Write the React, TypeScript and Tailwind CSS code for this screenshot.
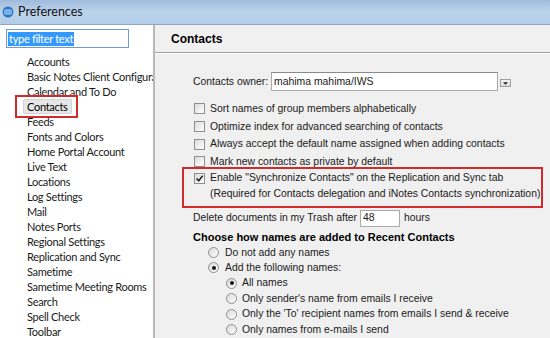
import React from "react";

const Check = ({ checked = false }: { checked?: boolean }) => (
  <span className="relative inline-block w-[11px] h-[11px] border border-[#8e8f8f] bg-gradient-to-br from-[#dcdcdc] to-white shrink-0">
    {checked && (
      <svg viewBox="0 0 9 9" className="absolute left-0 top-0 w-[9px] h-[9px]">
        <path d="M1.5 4.5 L3.7 6.8 L7.7 1.8" stroke="#222" strokeWidth="1.6" fill="none" />
      </svg>
    )}
  </span>
);

const Radio = ({ checked = false }: { checked?: boolean }) => (
  <span className="relative inline-flex items-center justify-center w-[11px] h-[11px] rounded-full border border-[#8e8f8f] bg-gradient-to-br from-[#d8d8d8] to-white shrink-0">
    {checked && <span className="w-[4px] h-[4px] rounded-full bg-[#1a1a1a]" />}
  </span>
);

const treeItems = [
  "Accounts",
  "Basic Notes Client Configuration",
  "Calendar and To Do",
  "Contacts",
  "Feeds",
  "Fonts and Colors",
  "Home Portal Account",
  "Live Text",
  "Locations",
  "Log Settings",
  "Mail",
  "Notes Ports",
  "Regional Settings",
  "Replication and Sync",
  "Sametime",
  "Sametime Meeting Rooms",
  "Search",
  "Spell Check",
  "Toolbar",
];

export default function App() {
  return (
    <div className="w-[550px] h-[338px] overflow-hidden flex flex-col bg-[#f0f0f0] text-black">
      {/* Title bar */}
      <div className="h-[25px] shrink-0 flex items-center gap-[4px] pl-[2px] bg-gradient-to-b from-[#9fbbdc] via-[#bcd3ec] to-[#b4cde8] border-b border-[#8ea7c4] font-['Lato',sans-serif] text-[12.5px]">
        <svg viewBox="0 0 12 12" className="w-[12px] h-[12px]">
          <circle cx="6" cy="6" r="5.5" fill="#2a78c8" />
          <path d="M3 3.5 V8.5 M5 3 V9 M7 3 V9 M9 3.5 V8.5" stroke="#cfe6ff" strokeWidth="1" />
        </svg>
        <span className="text-[#111]">Preferences</span>
      </div>

      <div className="flex-1 flex min-h-0">
        {/* Left panel */}
        <div className="w-[155px] shrink-0 bg-white border-r-2 border-[#b8b8b8] font-['Lato',sans-serif] text-[11px] tracking-[-0.3px] leading-[15px] overflow-hidden">
          <div className="ml-[6px] mt-[4px] w-[123px] h-[19px] border border-[#6f9bd6] bg-white flex items-center pl-[1px]">
            <span className="bg-[#3399ff] text-white px-[1px] leading-[14px] whitespace-nowrap">type filter text</span>
          </div>
          <div className="mt-[6px] whitespace-nowrap">
            {treeItems.map((t) =>
              t === "Contacts" ? (
                <div key={t} className="relative h-[15px] pl-[23px]">
                  <span className="bg-[#e6e6e6] border border-[#d4d4d4] rounded-[2px] px-[3px] py-0">{t}</span>
                  <span className="absolute left-[15px] top-[-4px] w-[63px] h-[23px] border-2 border-[#d22b2b]" />
                </div>
              ) : (
                <div key={t} className="h-[15px] pl-[27px] text-[#1a1a1a]">
                  {t}
                </div>
              )
            )}
          </div>
        </div>

        {/* Right panel */}
        <div className="flex-1 min-w-0 flex flex-col font-['Liberation_Sans',sans-serif] text-[10.4px] text-[#1a1a1a] whitespace-nowrap">
          <div className="h-[28px] shrink-0 flex items-center pl-[16px] border-b border-[#a0a0a0] font-bold text-[12px] text-black">
            Contacts
          </div>
          <div className="border-t border-white" />

          <div className="pl-[38px] pt-[18px]">
            {/* owner */}
            <div className="flex items-center h-[19px]">
              <span>Contacts owner:</span>
              <div className="ml-[3px] w-[227px] h-[19px] bg-white border border-[#a9a9a9] border-t-[#8a8a8a] flex items-center pl-[2px]">
                mahima mahima/IWS
              </div>
              <span className="ml-[2px] mt-[3px] w-[11px] h-[8px] border border-[#a0a0a0] bg-gradient-to-b from-[#f6f6f6] to-[#dcdcdc] flex items-center justify-center">
                <svg viewBox="0 0 6 3" className="w-[5px] h-[3px]">
                  <path d="M0 0 H6 L3 3 Z" fill="#222" />
                </svg>
              </span>
            </div>

            {/* checkboxes */}
            <div className="mt-[9px] flex flex-col">
              {[
                "Sort names of group members alphabetically",
                "Optimize index for advanced searching of contacts",
                "Always accept the default name assigned when adding contacts",
                "Mark new contacts as private by default",
              ].map((t) => (
                <div key={t} className="h-[17.7px] flex items-center gap-[5px] pl-[1px]">
                  <Check />
                  <span>{t}</span>
                </div>
              ))}
            </div>

            <div className="relative">
              <span className="absolute left-[-11px] top-[-4px] w-[361px] h-[41px] border-2 border-[#d22b2b]" />
              <div className="h-[15px] flex items-center gap-[5px] pl-[1px]">
                <Check checked />
                <span>Enable "Synchronize Contacts" on the Replication and Sync tab</span>
              </div>
              <div className="h-[17px] flex items-center pl-[17px]">
                (Required for Contacts delegation and iNotes Contacts synchronization)
              </div>
            </div>

            <div className="mt-[7px] flex items-center h-[17px]">
              <span>Delete documents in my Trash after</span>
              <div className="ml-[3px] w-[40px] h-[17px] bg-white border border-[#a9a9a9] flex items-center pl-[2px]">48</div>
              <span className="ml-[4px]">hours</span>
            </div>

            <div className="mt-[3px] h-[14px] flex items-center font-bold text-[11px] text-black">
              Choose how names are added to Recent Contacts
            </div>

            <div className="flex flex-col pl-[15px] mt-[1px]">
              <div className="h-[15.4px] flex items-center gap-[6px]">
                <Radio />
                <span>Do not add any names</span>
              </div>
              <div className="h-[15.4px] flex items-center gap-[6px]">
                <Radio checked />
                <span>Add the following names:</span>
              </div>
              <div className="flex flex-col pl-[18px]">
                {[
                  ["All names", true],
                  ["Only sender's name from emails I receive", false],
                  ["Only the 'To' recipient names from emails I send & receive", false],
                  ["Only names from e-mails I send", false],
                ].map(([t, c]) => (
                  <div key={t as string} className="h-[15.4px] flex items-center gap-[5px]">
                    <Radio checked={c as boolean} />
                    <span>{t as string}</span>
                  </div>
                ))}
              </div>
            </div>
          </div>
        </div>
      </div>
    </div>
  );
}
